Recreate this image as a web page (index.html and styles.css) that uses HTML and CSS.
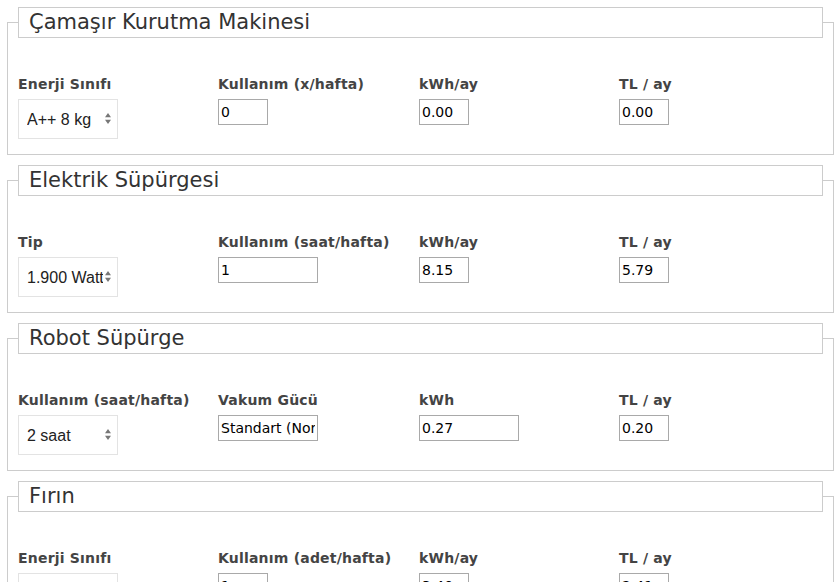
FILE: index.html
```html
<!DOCTYPE html>
<html lang="tr">
<head>
    <meta charset="UTF-8">
    <meta name="viewport" content="width=device-width, initial-scale=1.0">
    <title>Elektrik Tüketimi Hesaplama</title>
    <link rel="stylesheet" href="styles.css">
</head>
<body>
    <fieldset class="device">
        <legend>Çamaşır Kurutma Makinesi</legend>
        <div class="row">
            <div class="field">
                <label>Enerji Sınıfı</label>
                <span class="select-wrap">
                    <select><option>A++ 8 kg</option></select>
                    <svg class="arrows" width="6" height="11" viewBox="0 0 6 11"><path d="M3 0L6 4.2H0z M3 11L0 6.8h6z" fill="#777"/></svg>
                </span>
            </div>
            <div class="field">
                <label>Kullanım (x/hafta)</label>
                <input type="text" class="short" value="0">
            </div>
            <div class="field">
                <label>kWh/ay</label>
                <input type="text" class="short" value="0.00">
            </div>
            <div class="field">
                <label>TL / ay</label>
                <input type="text" class="short" value="0.00">
            </div>
        </div>
    </fieldset>

    <fieldset class="device">
        <legend>Elektrik Süpürgesi</legend>
        <div class="row">
            <div class="field">
                <label>Tip</label>
                <span class="select-wrap">
                    <select><option>1.900 Watt</option></select>
                    <svg class="arrows" width="6" height="11" viewBox="0 0 6 11"><path d="M3 0L6 4.2H0z M3 11L0 6.8h6z" fill="#777"/></svg>
                </span>
            </div>
            <div class="field">
                <label>Kullanım (saat/hafta)</label>
                <input type="text" class="long" value="1">
            </div>
            <div class="field">
                <label>kWh/ay</label>
                <input type="text" class="short" value="8.15">
            </div>
            <div class="field">
                <label>TL / ay</label>
                <input type="text" class="short" value="5.79">
            </div>
        </div>
    </fieldset>

    <fieldset class="device">
        <legend>Robot Süpürge</legend>
        <div class="row">
            <div class="field">
                <label>Kullanım (saat/hafta)</label>
                <span class="select-wrap">
                    <select><option>2 saat</option></select>
                    <svg class="arrows" width="6" height="11" viewBox="0 0 6 11"><path d="M3 0L6 4.2H0z M3 11L0 6.8h6z" fill="#777"/></svg>
                </span>
            </div>
            <div class="field">
                <label>Vakum Gücü</label>
                <input type="text" class="long" value="Standart (Normal)">
            </div>
            <div class="field">
                <label>kWh</label>
                <input type="text" class="long" value="0.27">
            </div>
            <div class="field">
                <label>TL / ay</label>
                <input type="text" class="short" value="0.20">
            </div>
        </div>
    </fieldset>

    <fieldset class="device">
        <legend>Fırın</legend>
        <div class="row">
            <div class="field">
                <label>Enerji Sınıfı</label>
                <span class="select-wrap">
                    <select><option>A</option></select>
                    <svg class="arrows" width="6" height="11" viewBox="0 0 6 11"><path d="M3 0L6 4.2H0z M3 11L0 6.8h6z" fill="#777"/></svg>
                </span>
            </div>
            <div class="field">
                <label>Kullanım (adet/hafta)</label>
                <input type="text" class="short" value="1">
            </div>
            <div class="field">
                <label>kWh/ay</label>
                <input type="text" class="short" value="3.40">
            </div>
            <div class="field">
                <label>TL / ay</label>
                <input type="text" class="short" value="2.41">
            </div>
        </div>
    </fieldset>
</body>
</html>
```

FILE: styles.css
```css
body {
    font-family: "DejaVu Sans", Verdana, sans-serif;
    margin: 7px 5px 0 7px;
    color: #333;
    background: #fff;
}
.device {
    margin: 0 0 10px 0;
    padding: 0 10px 15px 10px;
    border: 1px solid #ccc;
    min-width: 0;
}
.device legend {
    box-sizing: border-box;
    width: 100%;
    padding: 0 10px;
    border: 1px solid #ccc;
    font-size: 21px;
    line-height: 29px;
    color: #333;
}
.row {
    display: grid;
    grid-template-columns: 200px 201px 200px 200px;
    margin-top: 38px;
}
.field label {
    display: block;
    font-size: 14px;
    font-weight: bold;
    letter-spacing: 0.2px;
    line-height: 16px;
    color: #444;
    margin-bottom: 7px;
}
.field input {
    box-sizing: border-box;
    height: 26px;
    padding: 1px 2px;
    border: 1px solid #a9a9a9;
    font-family: "DejaVu Sans", Verdana, sans-serif;
    font-size: 14px;
    color: #000;
}
.field input.short {
    width: 50px;
}
.field input.long {
    width: 100px;
}
.select-wrap {
    position: relative;
    display: inline-block;
}
.select-wrap select {
    -webkit-appearance: none;
    appearance: none;
    box-sizing: border-box;
    width: 100px;
    height: 40px;
    padding: 0 14px 0 8px;
    border: 1px solid #e3e3e3;
    background: #fff;
    font-family: "Liberation Sans", Arial, sans-serif;
    font-size: 16px;
    color: #222;
}
.select-wrap .arrows {
    position: absolute;
    right: 7px;
    top: 14px;
    pointer-events: none;
}
```
